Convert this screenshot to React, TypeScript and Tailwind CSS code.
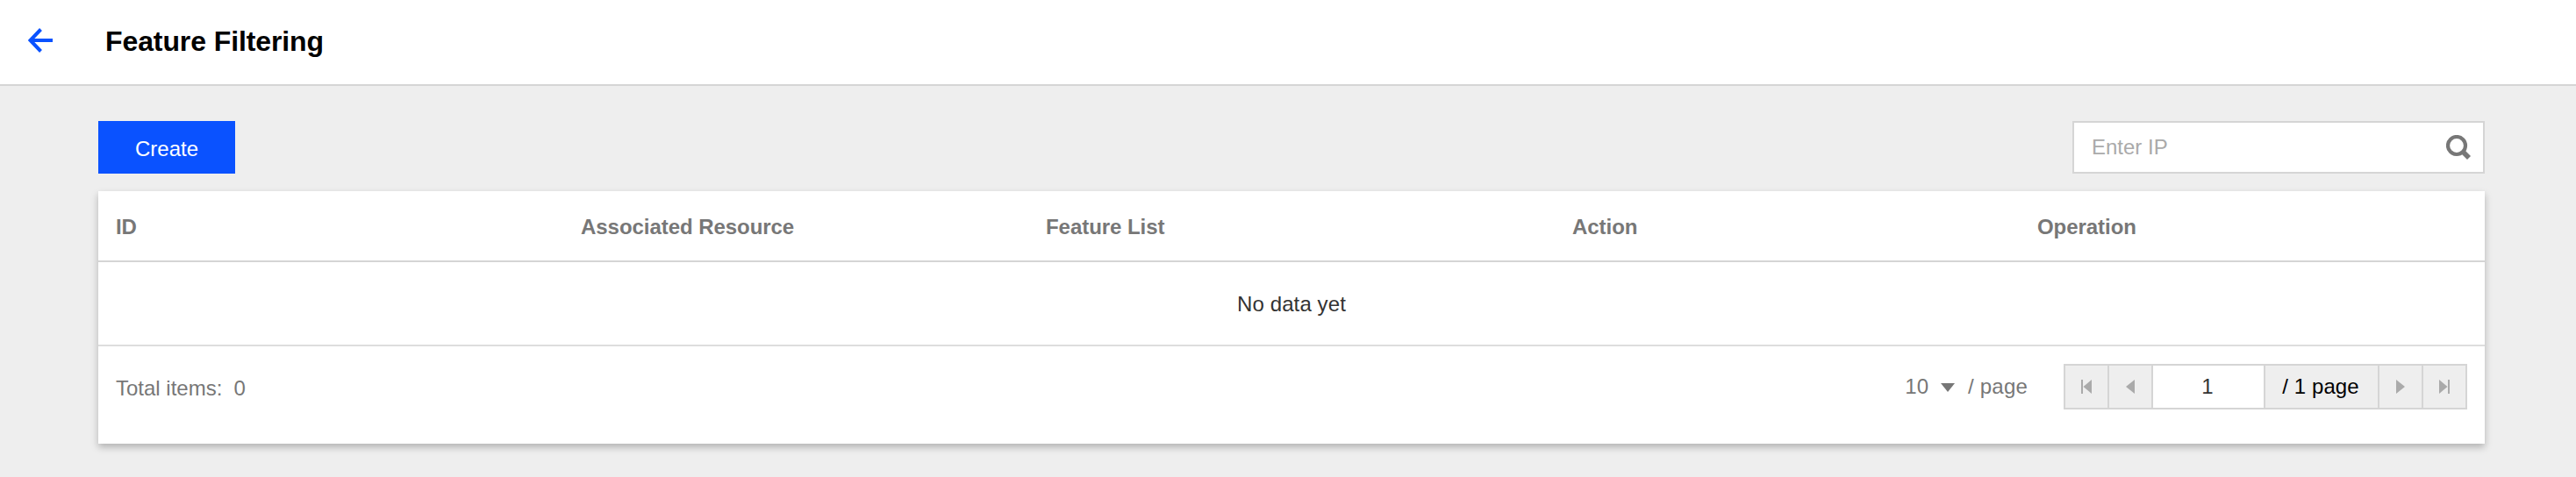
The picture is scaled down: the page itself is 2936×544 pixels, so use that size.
import React from "react";

const columns = [
  { label: "ID", width: "w-[530px]" },
  { label: "Associated Resource", width: "w-[530px]" },
  { label: "Feature List", width: "w-[600px]" },
  { label: "Action", width: "w-[530px]" },
  { label: "Operation", width: "w-[530px]" },
];

function BackArrow() {
  return (
    <svg className="ml-8 h-7 w-7 shrink-0" viewBox="0 0 28 28" fill="none" stroke="#0a52ff" strokeWidth="4">
      <path d="M28 14H3M14.5 1.5 2.5 14l12 12.5" />
    </svg>
  );
}

function SearchIcon() {
  return (
    <svg className="h-7 w-7" viewBox="0 0 28 28" fill="none" stroke="#777">
      <circle cx="12" cy="12" r="10" strokeWidth="4.2" />
      <path d="M18.5 18.5 26 26" strokeWidth="5.6" />
    </svg>
  );
}

function PageButton({ label, children }: { label: string; children: React.ReactNode }) {
  return (
    <button aria-label={label} className="flex h-full w-[50px] items-center justify-center border-r-2 border-[#d5d5d5] bg-[#eee] last:w-12 last:border-r-0">
      {children}
    </button>
  );
}

function Header() {
  return (
    <header className="flex h-[98px] items-center border-b-2 border-[#d5d5d5] bg-white">
      <button aria-label="Back" className="flex w-[120px] shrink-0 pb-1">
        <BackArrow />
      </button>
      <h1 className="pb-0.5 text-[32px] leading-10 font-bold tracking-[-0.1px] text-black">Feature Filtering</h1>
    </header>
  );
}

function Toolbar() {
  return (
    <div className="flex justify-between">
      <button className="h-[60px] w-[156px] bg-[#0a52ff] pt-1 text-2xl text-white">Create</button>
      <label className="flex h-[60px] w-[470px] items-center border-2 border-[#d5d5d5] bg-white pr-3.5 pl-5">
        <input className="min-w-0 flex-1 text-2xl outline-none placeholder:text-[#aaa]" placeholder="Enter IP" />
        <SearchIcon />
      </label>
    </div>
  );
}

function Pagination() {
  return (
    <div className="flex h-[52px] items-center">
      <span>10</span>
      <svg className="mt-0.5 ml-3.5 h-2.5 w-4" viewBox="0 0 16 10" fill="#777">
        <path d="M0 0h16L8 10z" />
      </svg>
      <span className="ml-[15px] tracking-[0.2px]">/ page</span>
      <div className="ml-[41px] flex h-full border-2 border-[#d5d5d5]">
        <PageButton label="First page">
          <svg className="h-4 w-3" viewBox="0 0 12 16" fill="#aaa">
            <path d="M0 0h2v16H0zM12 0v16L2.5 8z" />
          </svg>
        </PageButton>
        <PageButton label="Previous page">
          <svg className="h-4 w-2.5" viewBox="0 0 10 16" fill="#aaa">
            <path d="M10 0v16L0 8z" />
          </svg>
        </PageButton>
        <input className="h-full w-[126px] pr-0.5 text-center text-[#333] outline-none" defaultValue="1" />
        <div className="flex h-full w-[132px] items-center justify-center border-x-2 border-[#d5d5d5] bg-[#eee] pr-0.5 tracking-[0.1px] text-black">/ 1 page</div>
        <PageButton label="Next page">
          <svg className="h-4 w-2.5" viewBox="0 0 10 16" fill="#aaa">
            <path d="M0 0v16l10-8z" />
          </svg>
        </PageButton>
        <PageButton label="Last page">
          <svg className="h-4 w-3" viewBox="0 0 12 16" fill="#aaa">
            <path d="M10 0h2v16h-2zM0 0v16l9.5-8z" />
          </svg>
        </PageButton>
      </div>
    </div>
  );
}

export default function App() {
  return (
    <div className="flex h-[544px] w-[2936px] flex-col bg-[#eee] font-['Liberation_Sans',Arial,sans-serif] text-2xl text-[#777]">
      <Header />
      <main className="flex flex-col gap-5 pt-10 pr-[104px] pl-[112px]">
        <Toolbar />
        <section className="h-72 bg-white shadow-[0_4px_8px_rgba(0,0,0,0.25)]">
          <table className="w-full table-fixed border-collapse">
            <thead>
              <tr className="h-20 border-b-2 border-[#d5d5d5]">
                {columns.map((column) => (
                  <th key={column.label} className={`${column.width} px-5 pt-0.5 text-left font-bold tracking-[-0.05px]`}>
                    {column.label}
                  </th>
                ))}
              </tr>
            </thead>
            <tbody>
              <tr className="h-24 border-b-2 border-[#ddd]">
                <td colSpan={5} className="pt-0.5 text-center tracking-[0.1px] text-[#333]">No data yet</td>
              </tr>
            </tbody>
          </table>
          <div className="flex items-start justify-between px-5 pt-5">
            <div className="pt-3 leading-8">
              Total items:<span className="ml-[13px]">0</span>
            </div>
            <Pagination />
          </div>
        </section>
      </main>
    </div>
  );
}
